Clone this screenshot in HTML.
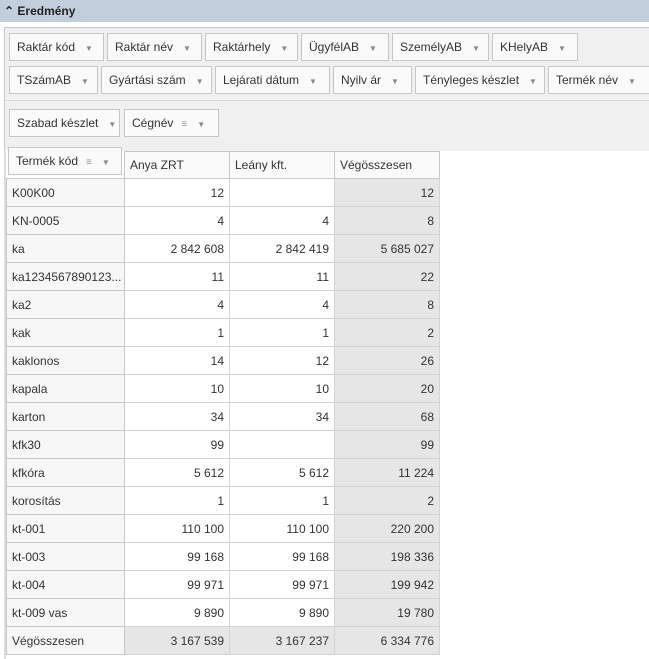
<!DOCTYPE html>
<html><head><meta charset="utf-8"><style>
*{margin:0;padding:0;box-sizing:border-box}
body{width:649px;height:659px;background:#fff;font-family:"Liberation Sans",sans-serif;font-size:12px;color:#333;position:relative;overflow:hidden}
.title{position:absolute;left:0;top:0;width:649px;height:22px;background:#c1cfdc;font-weight:bold;font-size:12px;line-height:22px;padding-left:4px;color:#222}
.panel{position:absolute;left:4px;top:27px;width:645px;height:124px;background:#f0f0f0;border-top:1px solid #c8c8c8;border-left:1px solid #c8c8c8}
.lb{position:absolute;left:4px;top:151px;width:2px;height:508px;background:#dcdcdc}
.sep{position:absolute;left:5px;top:100px;width:644px;height:1px;background:#d8d8d8}
.b{position:absolute;height:28px;border:1px solid #c6c6c6;background:#fafafa;line-height:26px;padding-left:7px;font-size:12px;color:#333;white-space:nowrap;overflow:hidden}
.b i{font-style:normal;color:#888;font-size:8px;margin-left:10px}
.b s{text-decoration:none;color:#999;font-size:10px;margin-left:8px}
table{position:absolute;left:6px;top:151px;border-collapse:collapse;font-size:12px;table-layout:fixed;width:433px}
td{height:28px;border:1px solid #d4d4d4;padding:0 5px;text-align:right;color:#333;white-space:nowrap;overflow:hidden}
td.h{text-align:left;background:#f7f7f7;border-color:#c8c8c8}
td.t{background:#e6e6e6}
tr.hd td{text-align:left;border-color:#c8c8c8;height:27px}
</style></head><body>
<div class="title">&#8963; Eredmény</div>
<div class="panel"></div>
<div class="sep"></div>
<div class="lb"></div>
<div class="b" style="left:9px;top:33px;width:95px">Raktár kód<i>▼</i></div>
<div class="b" style="left:107px;top:33px;width:95px">Raktár név<i>▼</i></div>
<div class="b" style="left:205px;top:33px;width:93px">Raktárhely<i>▼</i></div>
<div class="b" style="left:301px;top:33px;width:88px">ÜgyfélAB<i>▼</i></div>
<div class="b" style="left:392px;top:33px;width:97px">SzemélyAB<i>▼</i></div>
<div class="b" style="left:492px;top:33px;width:86px">KHelyAB<i>▼</i></div>
<div class="b" style="left:9px;top:66px;width:89px">TSzámAB<i>▼</i></div>
<div class="b" style="left:101px;top:66px;width:111px">Gyártási szám<i>▼</i></div>
<div class="b" style="left:215px;top:66px;width:115px">Lejárati dátum<i>▼</i></div>
<div class="b" style="left:333px;top:66px;width:79px">Nyilv ár<i>▼</i></div>
<div class="b" style="left:415px;top:66px;width:130px">Tényleges készlet<i>▼</i></div>
<div class="b" style="left:548px;top:66px;width:105px">Termék név<i>▼</i></div>
<div class="b" style="left:9px;top:109px;width:111px">Szabad készlet<i>▼</i></div>
<div class="b" style="left:124px;top:109px;width:95px">Cégnév<s>&#8801;</s><i>▼</i></div>
<div class="b" style="left:8px;top:147px;width:114px;z-index:2">Termék kód<s>&#8801;</s><i>▼</i></div>
<table>
<colgroup><col style="width:118px"><col style="width:105px"><col style="width:105px"><col style="width:105px"></colgroup>
<tr class="hd"><td class="h" style="border:none;background:transparent"></td><td style="background:#fafafa">Anya ZRT</td><td style="background:#fafafa">Leány kft.</td><td class="t" style="background:#fafafa">Végösszesen</td></tr>
<tr><td class="h">K00K00</td><td>12</td><td></td><td class="t">12</td></tr>
<tr><td class="h">KN-0005</td><td>4</td><td>4</td><td class="t">8</td></tr>
<tr><td class="h">ka</td><td>2 842 608</td><td>2 842 419</td><td class="t">5 685 027</td></tr>
<tr><td class="h">ka1234567890123...</td><td>11</td><td>11</td><td class="t">22</td></tr>
<tr><td class="h">ka2</td><td>4</td><td>4</td><td class="t">8</td></tr>
<tr><td class="h">kak</td><td>1</td><td>1</td><td class="t">2</td></tr>
<tr><td class="h">kaklonos</td><td>14</td><td>12</td><td class="t">26</td></tr>
<tr><td class="h">kapala</td><td>10</td><td>10</td><td class="t">20</td></tr>
<tr><td class="h">karton</td><td>34</td><td>34</td><td class="t">68</td></tr>
<tr><td class="h">kfk30</td><td>99</td><td></td><td class="t">99</td></tr>
<tr><td class="h">kfkóra</td><td>5 612</td><td>5 612</td><td class="t">11 224</td></tr>
<tr><td class="h">korosítás</td><td>1</td><td>1</td><td class="t">2</td></tr>
<tr><td class="h">kt-001</td><td>110 100</td><td>110 100</td><td class="t">220 200</td></tr>
<tr><td class="h">kt-003</td><td>99 168</td><td>99 168</td><td class="t">198 336</td></tr>
<tr><td class="h">kt-004</td><td>99 971</td><td>99 971</td><td class="t">199 942</td></tr>
<tr><td class="h">kt-009 vas</td><td>9 890</td><td>9 890</td><td class="t">19 780</td></tr>
<tr><td class="h">Végösszesen</td><td style="background:#e6e6e6">3 167 539</td><td style="background:#e6e6e6">3 167 237</td><td class="t">6 334 776</td></tr>
</table>
</body></html>
